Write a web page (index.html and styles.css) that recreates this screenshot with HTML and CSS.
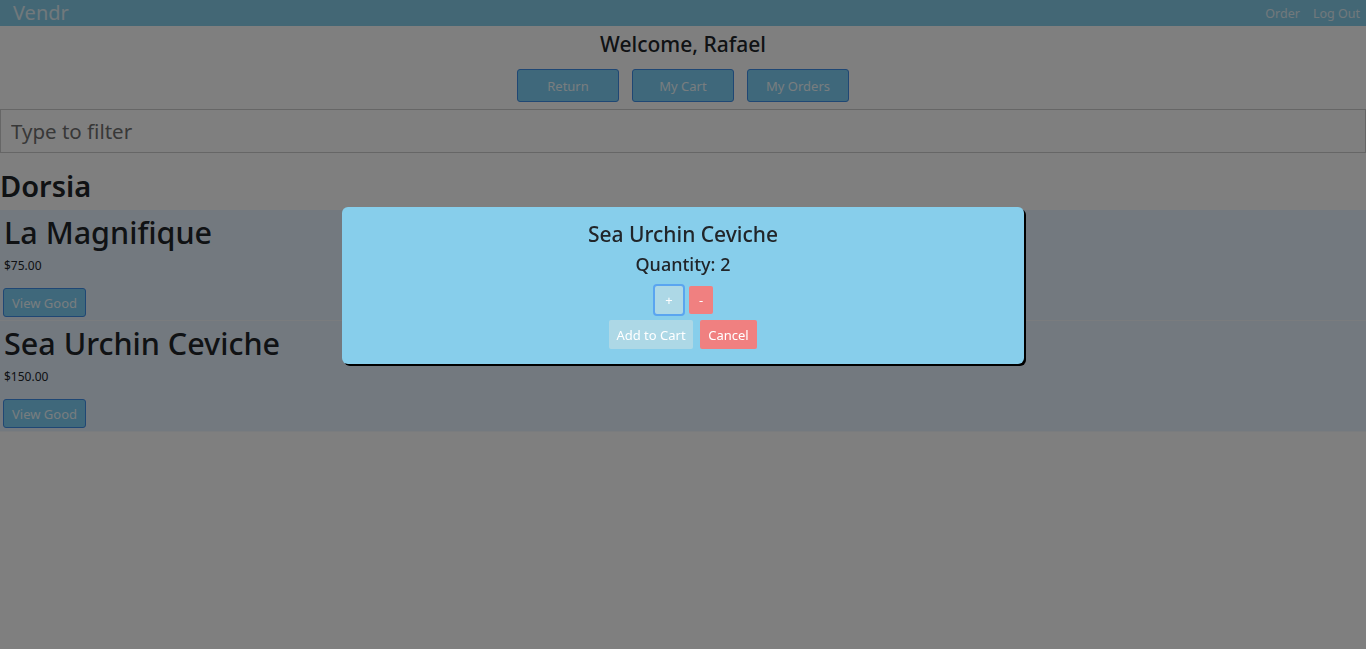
FILE: index.html
```html
<!DOCTYPE html>
<html lang="en">
<head>
<meta charset="utf-8">
<title>Vendr</title>
<link rel="stylesheet" href="styles.css">
</head>
<body>
<nav class="navbar">
  <a class="brand" href="#">Vendr</a>
  <div class="nav-links">
    <a href="#">Order</a>
    <a href="#">Log Out</a>
  </div>
</nav>
<main class="page">
  <h4 class="welcome">Welcome, Rafael</h4>
  <div class="actions">
    <button class="btn-main">Return</button>
    <button class="btn-main">My Cart</button>
    <button class="btn-main">My Orders</button>
  </div>
  <input class="filter" type="text" placeholder="Type to filter">
  <h2 class="vendor">Dorsia</h2>
  <div class="goods">
    <div class="good">
      <h1 class="good-name">La Magnifique</h1>
      <p class="good-price">$75.00</p>
      <button class="btn-view">View Good</button>
    </div>
    <div class="good">
      <h1 class="good-name">Sea Urchin Ceviche</h1>
      <p class="good-price">$150.00</p>
      <button class="btn-view">View Good</button>
    </div>
  </div>
</main>
<div class="overlay"></div>
<div class="modal">
  <h4 class="modal-title">Sea Urchin Ceviche</h4>
  <h5 class="modal-qty">Quantity: 2</h5>
  <div class="qty-row">
    <button class="btn-plus">+</button>
    <button class="btn-minus">-</button>
  </div>
  <div class="modal-row">
    <button class="btn-add">Add to Cart</button>
    <button class="btn-cancel">Cancel</button>
  </div>
</div>
</body>
</html>
```
FILE: styles.css
```css
* { box-sizing: border-box; }
html, body { margin: 0; padding: 0; }
body {
  font-family: "Noto Sans", "Open Sans", sans-serif;
  color: #212529;
  background: #ffffff;
  min-height: 649px;
}
.navbar {
  height: 26px;
  background: #87ceeb;
  display: flex;
  align-items: center;
  justify-content: space-between;
  padding: 0 6px 0 13px;
}
.brand {
  color: #e2f2f8;
  text-decoration: none;
  font-size: 20px;
  line-height: 26px;
}
.nav-links { display: flex; gap: 13px; }
.nav-links a {
  color: #e2f2f8;
  text-decoration: none;
  font-size: 12.5px;
}
.page { display: flex; flex-direction: column; }
.welcome {
  margin: 4px 0 0;
  text-align: center;
  font-size: 21px;
  font-weight: 500;
  line-height: 28px;
}
.actions {
  display: flex;
  justify-content: center;
  gap: 13px;
  margin-top: 11px;
}
.btn-main {
  width: 102px;
  height: 33px;
  background: #7ed0f6;
  border: 1px solid #3e8ee8;
  border-radius: 3px;
  color: #f0fbff;
  font-family: inherit;
  font-size: 13px;
  padding: 0;
}
.filter {
  margin-top: 7px;
  width: 100%;
  height: 44px;
  border: 1px solid #cccccc;
  padding: 0 10px;
  font-family: inherit;
  font-size: 20.5px;
  color: #212529;
}
.filter::placeholder { color: #707070; }
.vendor {
  margin: 16px 0 7px;
  font-size: 29px;
  font-weight: 600;
  line-height: 34px;
}
.goods { display: flex; flex-direction: column; }
.good {
  background: #e6f2ff;
  padding: 4px 3px 2px;
  height: 111px;
  border-bottom: 1px solid #f4f8fc;
}
.good-name {
  margin: 0 0 0 1px;
  font-size: 30.5px;
  font-weight: 500;
  line-height: 36px;
}
.good-price {
  margin: 8px 0 0 1px;
  font-size: 12px;
  line-height: 16px;
}
.btn-view {
  margin-top: 14px;
  width: 83px;
  height: 29px;
  background: #7ed0f6;
  border: 1px solid #3e8ee8;
  border-radius: 3px;
  color: #f0fbff;
  font-family: inherit;
  font-size: 13px;
  padding: 0;
}
.overlay {
  position: fixed;
  inset: 0;
  background: rgba(0, 0, 0, 0.5);
}
.modal {
  position: fixed;
  top: 207px;
  left: 342px;
  width: 682px;
  height: 157px;
  background: #87ceeb;
  border-radius: 6px;
  box-shadow: 2px 2px 0 #000000;
  display: flex;
  flex-direction: column;
  align-items: center;
  padding-top: 14px;
}
.modal-title {
  margin: 0;
  font-size: 21px;
  font-weight: 500;
  line-height: 26px;
}
.modal-qty {
  margin: 4px 0 0;
  font-size: 18px;
  font-weight: 500;
  line-height: 26px;
}
.qty-row {
  display: flex;
  gap: 4px;
  margin-top: 7px;
  align-items: center;
}
.btn-plus {
  width: 32px;
  height: 32px;
  background: #add8e6;
  border: 2px solid #5aa5f0;
  border-radius: 4px;
  color: #ffffff;
  font-family: inherit;
  font-size: 13px;
  padding: 0;
}
.btn-minus {
  width: 24px;
  height: 28px;
  background: #f08080;
  border: none;
  border-radius: 2px;
  color: #ffffff;
  font-family: inherit;
  font-size: 13px;
  padding: 0;
}
.modal-row {
  display: flex;
  gap: 7px;
  margin-top: 4px;
}
.btn-add {
  width: 84px;
  height: 29px;
  background: #add8e6;
  border: none;
  border-radius: 2px;
  color: #ffffff;
  font-family: inherit;
  font-size: 13px;
  padding: 0;
}
.btn-cancel {
  width: 57px;
  height: 29px;
  background: #f08080;
  border: none;
  border-radius: 2px;
  color: #ffffff;
  font-family: inherit;
  font-size: 13px;
  padding: 0;
}
```
